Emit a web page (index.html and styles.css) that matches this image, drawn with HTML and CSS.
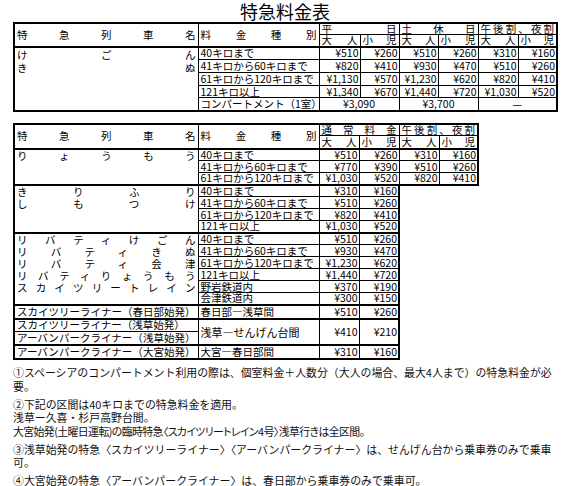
FILE: index.html
```html
<!DOCTYPE html>
<html lang="ja">
<head>
<meta charset="utf-8">
<title>特急料金表</title>
<link rel="stylesheet" href="styles.css">
</head>
<body>
<div class="page">
  <h1 class="title">特急料金表</h1>

  <table class="fare t1">
    <colgroup>
      <col class="w-name"><col class="w-type">
      <col class="w41"><col class="w39"><col class="w39"><col class="w40"><col class="w40"><col class="w39">
    </colgroup>
    <tr class="h11">
      <th rowspan="2" class="d l hb top">特急列車名</th>
      <th rowspan="2" class="d hb top">料金種別</th>
      <th colspan="2" class="d top">平日</th>
      <th colspan="2" class="d top">土休日</th>
      <th colspan="2" class="d top r">午後割、夜割</th>
    </tr>
    <tr class="h12">
      <th class="d hb">大人</th><th class="d hb">小児</th>
      <th class="d hb">大人</th><th class="d hb">小児</th>
      <th class="d hb">大人</th><th class="d hb r">小児</th>
    </tr>
    <tr class="h13">
      <td rowspan="5" class="nm n13 l bb"><div class="d">けごん</div><div class="d">きぬ</div></td>
      <td>40キロまで</td>
      <td class="y">¥510</td><td class="y">¥260</td><td class="y">¥510</td><td class="y">¥260</td><td class="y">¥310</td><td class="y r">¥160</td>
    </tr>
    <tr class="h13">
      <td>41キロから60キロまで</td>
      <td class="y">¥820</td><td class="y">¥410</td><td class="y">¥930</td><td class="y">¥470</td><td class="y">¥510</td><td class="y r">¥260</td>
    </tr>
    <tr class="h13">
      <td>61キロから120キロまで</td>
      <td class="y">¥1,130</td><td class="y">¥570</td><td class="y">¥1,230</td><td class="y">¥620</td><td class="y">¥820</td><td class="y r">¥410</td>
    </tr>
    <tr class="h12">
      <td>121キロ以上</td>
      <td class="y">¥1,340</td><td class="y">¥670</td><td class="y">¥1,440</td><td class="y">¥720</td><td class="y">¥1,030</td><td class="y r">¥520</td>
    </tr>
    <tr class="h13">
      <td class="bb">コンパートメント（1室）</td>
      <td colspan="2" class="c bb">¥3,090</td>
      <td colspan="2" class="c bb">¥3,700</td>
      <td colspan="2" class="c bb r">—</td>
    </tr>
  </table>

  <table class="fare t2">
    <colgroup>
      <col class="w-name"><col class="w-type">
      <col class="w40"><col class="w40"><col class="w40"><col class="w39">
    </colgroup>
    <tr class="h12">
      <th rowspan="2" class="d l hb top">特急列車名</th>
      <th rowspan="2" class="d hb top">料金種別</th>
      <th colspan="2" class="d top">通常料金</th>
      <th colspan="2" class="d top r">午後割、夜割</th>
    </tr>
    <tr class="h13">
      <th class="d hb">大人</th><th class="d hb">小児</th>
      <th class="d hb">大人</th><th class="d hb r">小児</th>
    </tr>

    <tr class="h12">
      <td rowspan="3" class="nm l bb"><div class="d">りょうもう</div></td>
      <td>40キロまで</td>
      <td class="y">¥510</td><td class="y">¥260</td><td class="y">¥310</td><td class="y r">¥160</td>
    </tr>
    <tr class="h12">
      <td>41キロから60キロまで</td>
      <td class="y">¥770</td><td class="y">¥390</td><td class="y">¥510</td><td class="y r">¥260</td>
    </tr>
    <tr class="h12">
      <td class="bb">61キロから120キロまで</td>
      <td class="y bb">¥1,030</td><td class="y bb">¥520</td><td class="y bb">¥820</td><td class="y bb r">¥410</td>
    </tr>

    <tr class="h12">
      <td rowspan="4" class="nm l bb"><div class="d">きりふり</div><div class="d">しもつけ</div></td>
      <td>40キロまで</td>
      <td class="y">¥310</td><td class="y r">¥160</td>
    </tr>
    <tr class="h12">
      <td>41キロから60キロまで</td>
      <td class="y">¥510</td><td class="y r">¥260</td>
    </tr>
    <tr class="h12">
      <td>61キロから120キロまで</td>
      <td class="y">¥820</td><td class="y r">¥410</td>
    </tr>
    <tr class="h12">
      <td class="bb">121キロ以上</td>
      <td class="y bb">¥1,030</td><td class="y bb r">¥520</td>
    </tr>

    <tr class="h12">
      <td rowspan="6" class="nm l bb">
        <div class="d">リバティけごん</div>
        <div class="d">リバティきぬ</div>
        <div class="d">リバティ会津</div>
        <div class="d">リバティりょうもう</div>
        <div class="d">スカイツリートレイン</div>
      </td>
      <td>40キロまで</td>
      <td class="y">¥510</td><td class="y r">¥260</td>
    </tr>
    <tr class="h12">
      <td>41キロから60キロまで</td>
      <td class="y">¥930</td><td class="y r">¥470</td>
    </tr>
    <tr class="h12">
      <td>61キロから120キロまで</td>
      <td class="y">¥1,230</td><td class="y r">¥620</td>
    </tr>
    <tr class="h12">
      <td>121キロ以上</td>
      <td class="y">¥1,440</td><td class="y r">¥720</td>
    </tr>
    <tr class="h12">
      <td>野岩鉄道内</td>
      <td class="y">¥370</td><td class="y r">¥190</td>
    </tr>
    <tr class="h12">
      <td class="bb">会津鉄道内</td>
      <td class="y bb">¥300</td><td class="y bb r">¥150</td>
    </tr>

    <tr class="h13">
      <td class="nm l bb"><div class="d">スカイツリーライナー（春日部始発）</div></td>
      <td class="bb">春日部―浅草間</td>
      <td class="y bb">¥510</td><td class="y bb r">¥260</td>
    </tr>
    <tr class="h13">
      <td class="nm l">スカイツリーライナー（浅草始発）</td>
      <td rowspan="2" class="big bb">浅草―せんげん台間</td>
      <td rowspan="2" class="y bb">¥410</td><td rowspan="2" class="y bb r">¥210</td>
    </tr>
    <tr class="h13">
      <td class="nm l bb"><div class="d">アーバンパークライナー（浅草始発）</div></td>
    </tr>
    <tr class="h13">
      <td class="nm l bb"><div class="d">アーバンパークライナー（大宮始発）</div></td>
      <td class="bb">大宮―春日部間</td>
      <td class="y bb">¥310</td><td class="y bb r">¥160</td>
    </tr>
  </table>

  <div class="notes">
    <p>①スペーシアのコンパートメント利用の際は、個室料金＋人数分（大人の場合、最大4人まで）の特急料金が必<br>要。</p>
    <p>②下記の区間は40キロまでの特急料金を適用。<br>浅草ー久喜・杉戸高野台間。<br><span class="pr">大宮始発(土曜日運転)の臨時特急〈スカイツリートレイン4号〉浅草行きは全区間。</span></p>
    <p>③浅草始発の特急〈スカイツリーライナー〉〈アーバンパークライナー〉は、せんげん台から乗車券のみで乗車<br>可。</p>
    <p>④大宮始発の特急〈アーバンパークライナー〉は、春日部から乗車券のみで乗車可。</p>
  </div>
</div>
</body>
</html>
```
FILE: styles.css
```css
html, body {
  margin: 0;
  padding: 0;
  background: #fff;
}

.page {
  padding-left: 13px;
  font-family: "Noto Sans CJK JP", "Noto Sans", sans-serif;
  color: #000;
}

.title {
  margin: 0;
  width: 544px;
  height: 22px;
  font-size: 18px;
  line-height: 22px;
  font-weight: normal;
  text-align: center;
}

.fare {
  border-collapse: collapse;
  table-layout: fixed;
  font-size: 10.5px;
  line-height: 10px;
}

.t1 { width: 543px; }
.t2 { width: 464px; margin-top: 11px; }

.w-name { width: 184px; }
.w-type { width: 121px; }
.w41 { width: 41px; }
.w40 { width: 40px; }
.w39 { width: 39px; }

.fare th,
.fare td {
  border: 1px solid #000;
  padding: 0 2px;
  white-space: nowrap;
  font-weight: normal;
  text-align: left;
  vertical-align: middle;
}

.h11 { height: 11px; }
.h12 { height: 12px; }
.h13 { height: 13px; }

.fare .top { border-top: 2px solid #000; }
.fare .l { border-left: 2px solid #000; }
.fare .r { border-right: 2px solid #000; }
.fare .hb { border-bottom: 2px solid #000; }
.fare .bb { border-bottom: 2px solid #000; }

.fare .d,
.nm .d {
  text-align: justify;
  text-align-last: justify;
}

.fare .nm {
  vertical-align: top;
}

.nm .d {
  height: 12px;
  line-height: 12px;
}

.nm.n13 .d {
  height: 13px;
  line-height: 13px;
}

.fare .y {
  text-align: right;
  padding-right: 1px;
}

.fare .c {
  text-align: center;
}

.fare .big {
  font-size: 11px;
}

.notes {
  margin-top: 6px;
  font-size: 10.9px;
  line-height: 13.5px;
  color: #111;
}

.notes p {
  margin: 0 0 4.5px;
  white-space: nowrap;
}

.notes .pr {
  font-feature-settings: "palt";
  letter-spacing: -0.6px;
}
```
